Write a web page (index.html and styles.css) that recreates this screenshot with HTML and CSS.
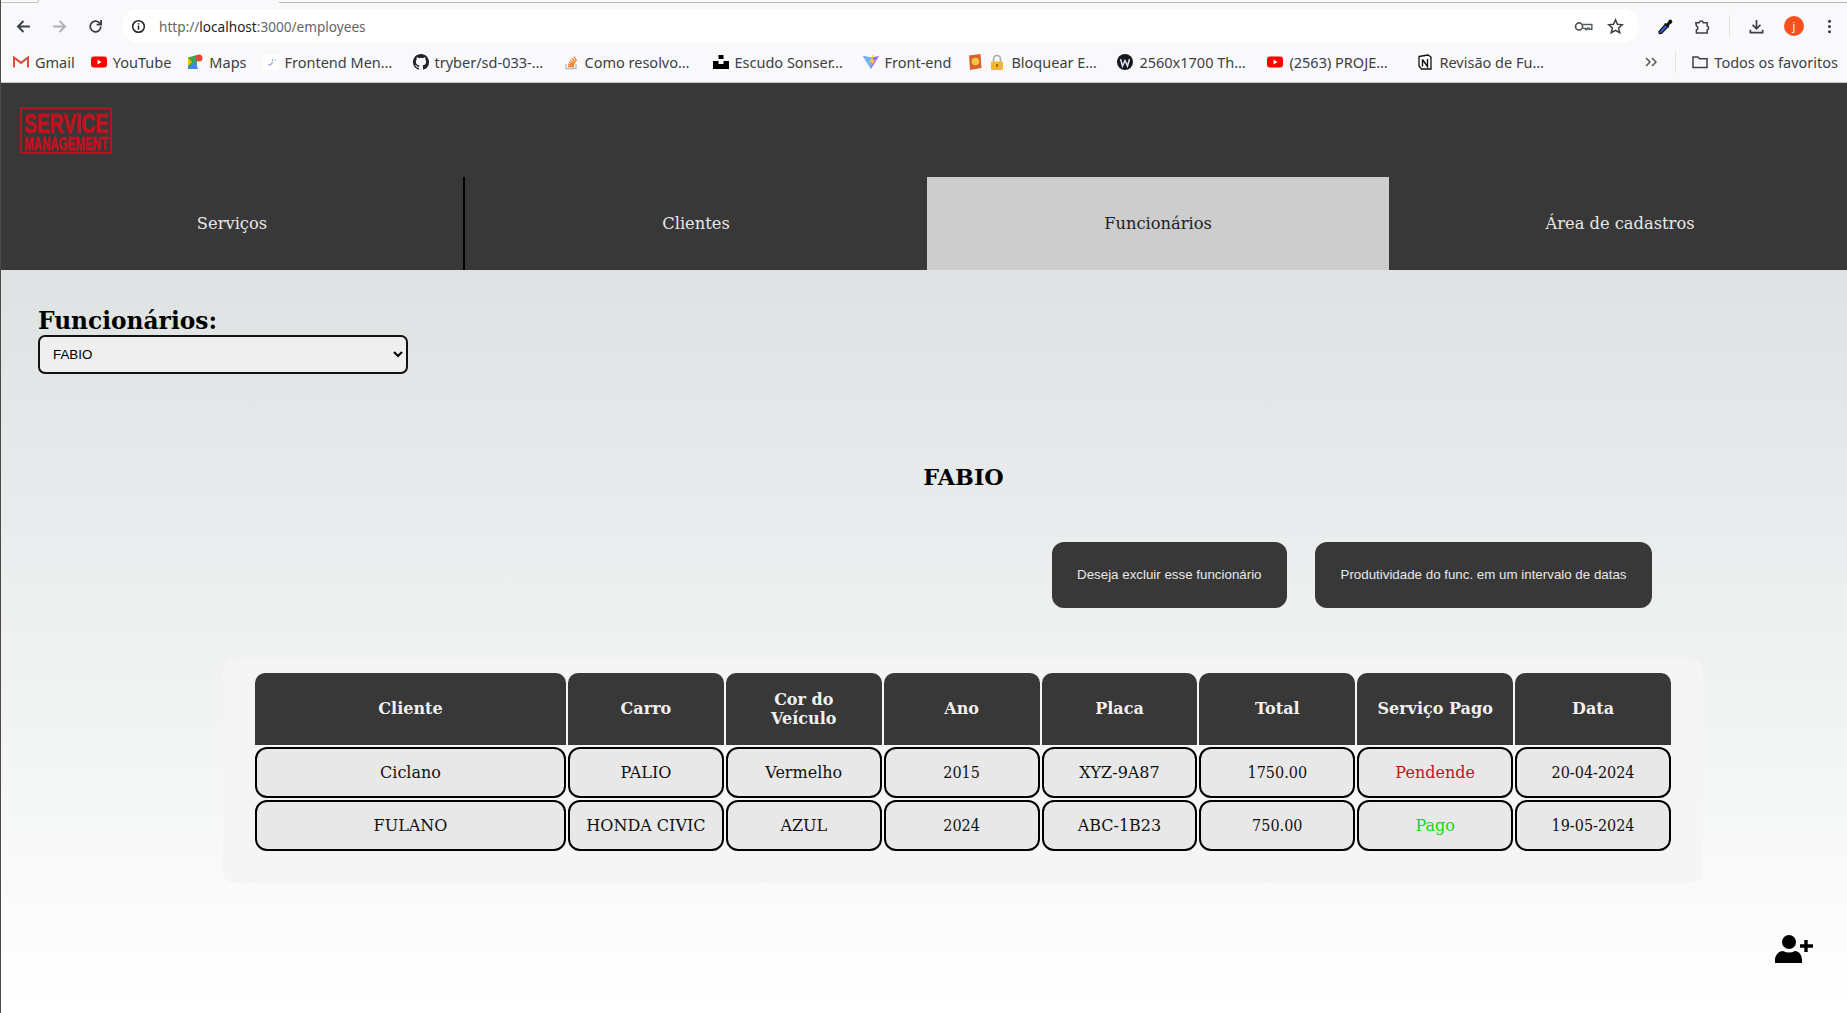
FILE: index.html
```html
<!doctype html>
<html lang="pt-BR">
  <head>
    <meta charset="utf-8" />
    <title>Service Management</title>
    <link rel="stylesheet" href="styles.css">
  </head>

  <body>
    <div class="browser">
      <div class="tabstrip">
        <span class="tab-left"></span>
        <span class="tab-right"></span>
      </div>
      <div class="toolbar">
        <svg class="tool" viewBox="0 0 16 16"><path d="M14 8H3M8 2.8 2.8 8 8 13.2" fill="none" stroke="#3c4043" stroke-width="1.8"/></svg>
        <svg class="tool tool-off" viewBox="0 0 16 16"><path d="M2 8h11M8 2.8 13.2 8 8 13.2" fill="none" stroke="#b0b2b5" stroke-width="1.8"/></svg>
        <svg class="tool" viewBox="0 0 16 16"><path d="M13 8a5 5 0 1 1-1.5-3.6L13 5.8M13.3 1.8v4.4H9" fill="none" stroke="#3c4043" stroke-width="1.7"/></svg>
        <div class="omnibox">
          <svg class="info" viewBox="0 0 16 16"><circle cx="8" cy="8" r="6.2" fill="none" stroke="#1f1f1f" stroke-width="1.6"/><path d="M8 7v4.4M8 4.4v1.5" stroke="#1f1f1f" stroke-width="1.6"/></svg>
          <span class="url">http://<b>localhost</b>:3000/employees</span>
          <svg class="omni-key" viewBox="0 0 20 14"><circle cx="5.200" cy="7" r="3.800" fill="none" stroke="#55585c" stroke-width="1.900"/><path d="M9 4.800h10v5.200h-2.800V8.800h-2v1.400h-2V9H9" fill="none" stroke="#55585c" stroke-width="1.500"/></svg>
          <svg class="omni-star" viewBox="0 0 18 18"><path d="m9 2 2.1 4.7 5.1.5-3.9 3.4 1.2 5L9 13l-4.5 2.6 1.2-5-3.9-3.4 5.1-.5z" fill="none" stroke="#3c4043" stroke-width="1.6"/></svg>
        </div>
        <div class="toolbar-end">
          <svg class="tool" viewBox="0 0 18 18"><path d="M2.500 16.500 2 14.500 9 6.500l2.800 2.600-7 7.200z" fill="#2f5fd0" stroke="#111" stroke-width="1.300"/><path d="m8.500 5.500 2 .2 2.200-3.200a2 2 0 0 1 3 2.700l-3 2.400.2 2-1.200.8-4-4z" fill="#111"/></svg>
          <svg class="tool" viewBox="0 0 18 18"><path d="M3 5h3.500a2.200 2.200 0 0 1 4.300 0H15v3.400a2.200 2.200 0 0 1 0 4.200V16H3.600v-3.400a2.200 2.200 0 0 0 0-4.200z" fill="none" stroke="#3c4043" stroke-width="1.600"/></svg>
          <span class="tool-sep"></span>
          <svg class="tool" viewBox="0 0 18 18"><path d="M9 2v9M4.800 7.200 9 11.400l4.200-4.200M2.500 12.500V15.500h13v-3" fill="none" stroke="#3c4043" stroke-width="1.800"/></svg>
          <span class="avatar">j</span>
          <svg class="tool" viewBox="0 0 18 18"><circle cx="9" cy="3.500" r="1.600" fill="#3c4043"/><circle cx="9" cy="9" r="1.600" fill="#3c4043"/><circle cx="9" cy="14.500" r="1.600" fill="#3c4043"/></svg>
        </div>
      </div>
      <div class="bookmarks">
        <a class="mark">
          <svg viewBox="0 0 16 16"><path d="M1 13.500V3.500l7 5.400 7-5.400v10" fill="none" stroke="#dd4b3e" stroke-width="2"/></svg>Gmail
        </a>
        <a class="mark">
          <svg viewBox="0 0 16 16"><rect y="2.500" width="16" height="11" rx="3" fill="#f00"/><path d="m6.500 5.500 4 2.500-4 2.500z" fill="#fff"/></svg>YouTube
        </a>
        <a class="mark">
          <svg viewBox="0 0 16 16"><path d="M1 3.500 10 1v14l-9 0z" fill="#34a853"/><path d="M1 15 8 7l3 8z" fill="#4285f4"/><path d="M1 3.500 5 8 1 12z" fill="#fbbc04"/><circle cx="12" cy="4" r="3.500" fill="#ea4335"/></svg>Maps
        </a>
        <a class="mark mark-long">
          <svg viewBox="0 0 16 16"><rect width="16" height="16" fill="#fff"/><path d="M5 11c2 0 4-1 4.500-3M9.500 5v2M12 6h1" fill="none" stroke="#8fa3cf" stroke-width="1.200"/></svg>Frontend Men…
        </a>
        <a class="mark mark-long">
          <svg viewBox="0 0 16 16"><path fill="#1f2328" d="M8 0C3.580 0 0 3.580 0 8c0 3.540 2.290 6.530 5.470 7.590.4.070.55-.17.55-.38 0-.19-.01-.82-.01-1.490-2.010.37-2.530-.49-2.690-.94-.09-.23-.48-.94-.82-1.130-.28-.15-.68-.52-.01-.53.63-.01 1.080.58 1.230.82.720 1.210 1.870.87 2.330.66.070-.52.280-.87.510-1.070-1.780-.2-3.640-.89-3.640-3.950 0-.87.310-1.590.820-2.150-.080-.2-.360-1.020.080-2.120 0 0 .670-.210 2.200.820a7.500 7.500 0 0 1 4 0c1.530-1.040 2.200-.82 2.200-.82.440 1.100.160 1.920.080 2.120.510.560.820 1.270.820 2.150 0 3.070-1.870 3.750-3.650 3.950.290.250.540.730.540 1.480 0 1.070-.010 1.930-.010 2.200 0 .210.150.460.550.380A8.010 8.010 0 0 0 16 8c0-4.420-3.580-8-8-8z"/></svg>tryber/sd-033-…
        </a>
        <a class="mark mark-long">
          <svg viewBox="0 0 16 16"><path d="M3 10v4.500h10V10" fill="none" stroke="#bcbbbb" stroke-width="1.300"/><path d="M5 12.500h6M5.200 10.500l5.800.6M5.800 8.500l5.500 1.500M7 6.300l5 2.700M8.800 4.300l4 3.800M11 2.500l2.600 4.500" stroke="#f48024" stroke-width="1.300"/></svg>Como resolvo…
        </a>
        <a class="mark mark-long">
          <svg viewBox="0 0 16 16"><path d="M5.500 1h5v4h-5zM0 7h5.500v3h5V7H16v8H0z" fill="#000"/></svg>Escudo Sonser…
        </a>
        <a class="mark">
          <svg viewBox="0 0 16 16"><path d="M0 2 8 15 16 2 8 3.500z" fill="#9f6cff"/><path d="M0 2 8 3.500V15z" fill="#6bb6ff"/><path d="M9.500 1 6.500 8.500H9L8 12l4-6H9.500l1-5z" fill="#ffd028"/></svg>Front-end
        </a>
        <a class="mark mark-long">
          <svg viewBox="0 0 16 16"><path d="M2 1.500 13.500 0l1 14L3 16z" fill="#d9622b"/><circle cx="8.500" cy="7.500" r="3.800" fill="#f6c544"/></svg>
          <svg viewBox="0 0 16 16"><path d="M4.500 8V5a3.500 3.500 0 0 1 7 0v3" fill="none" stroke="#a8a8a8" stroke-width="1.600"/><rect x="2" y="7.500" width="12" height="8.500" rx="1" fill="#f2b632"/><path d="M8 10v3" stroke="#7a5a10" stroke-width="1.500"/></svg>Bloquear E…
        </a>
        <a class="mark mark-long">
          <svg viewBox="0 0 16 16"><circle cx="8" cy="8" r="8" fill="#16181c"/><path d="m3.500 5 2 7 2.500-5.500 2.500 5.500 2-7" fill="none" stroke="#dfe3f5" stroke-width="1.500"/></svg>2560x1700 Th…
        </a>
        <a class="mark mark-long">
          <svg viewBox="0 0 16 16"><rect y="2.500" width="16" height="11" rx="3" fill="#f00"/><path d="m6.500 5.500 4 2.500-4 2.500z" fill="#fff"/></svg>(2563) PROJE…
        </a>
        <a class="mark mark-long">
          <svg viewBox="0 0 16 16"><path d="M2 2.500 11 1l3 2v12H4.500L2 12z" fill="#fff" stroke="#111" stroke-width="1.300"/><path d="M5.500 5.500v7M5.500 5.500l5 7V5" fill="none" stroke="#111" stroke-width="1.400"/></svg>Revisão de Fu…
        </a>
        <div class="bookmarks-end">
          <svg class="chevrons" viewBox="0 0 12 10"><path d="m1 1 4 4-4 4M7 1l4 4-4 4" fill="none" stroke="#555" stroke-width="1.500"/></svg>
          <span class="tool-sep"></span>
          <a class="mark">
            <svg viewBox="0 0 16 16"><path d="M1 3h5l1.500 1.800H15V13.500H1z" fill="none" stroke="#3c4043" stroke-width="1.500"/></svg>Todos os favoritos
          </a>
        </div>
      </div>
    </div>

    <header class="app-header">
      <div class="logo-row">
        <svg class="logo" viewBox="0 0 93 47">
          <rect x="1" y="1" width="91" height="45" fill="none" stroke="#c4101f" stroke-width="1.800"/>
          <g transform="scale(1 1.750)">
            <text x="4" y="14.600" textLength="85" lengthAdjust="spacingAndGlyphs" class="logo-top">SERVICE</text>
            <text x="4" y="24.600" textLength="85" lengthAdjust="spacingAndGlyphs" class="logo-bottom">MANAGEMENT</text>
          </g>
        </svg>
      </div>
      <nav class="nav">
        <a class="nav-item nav-first">Serviços</a>
        <a class="nav-item">Clientes</a>
        <a class="nav-item nav-active">Funcionários</a>
        <a class="nav-item">Área de cadastros</a>
      </nav>
    </header>

    <main class="content">
      <label class="picker-label" for="employee">Funcionários:</label>
      <select class="picker" id="employee">
        <option>FABIO</option>
      </select>

      <h2 class="employee-name">FABIO</h2>

      <div class="actions">
        <button class="action">Deseja excluir esse funcionário</button>
        <button class="action">Produtividade do func. em um intervalo de datas</button>
      </div>

      <section class="panel">
        <table class="services">
          <thead>
            <tr>
              <th class="col-client">Cliente</th>
              <th>Carro</th>
              <th>Cor do<br>Veículo</th>
              <th>Ano</th>
              <th>Placa</th>
              <th>Total</th>
              <th>Serviço Pago</th>
              <th>Data</th>
            </tr>
          </thead>
          <tbody>
            <tr>
              <td>Ciclano</td>
              <td>PALIO</td>
              <td>Vermelho</td>
              <td class="num">2015</td>
              <td>XYZ-9A87</td>
              <td class="num">1750.00</td>
              <td class="pending">Pendende</td>
              <td class="num">20-04-2024</td>
            </tr>
            <tr>
              <td>FULANO</td>
              <td>HONDA CIVIC</td>
              <td>AZUL</td>
              <td class="num">2024</td>
              <td>ABC-1B23</td>
              <td class="num">750.00</td>
              <td class="paid">Pago</td>
              <td class="num">19-05-2024</td>
            </tr>
          </tbody>
        </table>
      </section>

      <svg class="add-user" viewBox="0 0 38 28">
        <circle cx="14" cy="7" r="7"/>
        <path d="M0 28v-3c0-5 4-9 8-9 2 1 4 1.500 6 1.500s4-.5 6-1.500c4 0 7 4 7 9v3z"/>
        <path d="M31 5v12M25 11h13" stroke="#000" stroke-width="3.400" fill="none"/>
      </svg>
    </main>
  </body>
</html>
```

FILE: styles.css
```css
* {
  box-sizing: border-box;
}
body {
  margin: 0;
  height: 1013px;
  overflow: hidden;
  display: flex;
  flex-direction: column;
  border-left: 1px solid #4a4a4a;
  font-family: "DejaVu Serif", serif;
}

/* browser chrome */
.browser {
  height: 83px;
  background: #f9f9fb;
  border-bottom: 1px solid #c8c8c8;
  font-family: "Noto Sans", sans-serif;
  color: #3c4043;
}
.tabstrip {
  height: 3px;
  display: flex;
  justify-content: space-between;
}
.tab-left {
  width: 38px;
  border-bottom: 1px solid #c4c4c4;
  border-right: 1px solid #c4c4c4;
  border-bottom-right-radius: 3px;
}
.tab-right {
  width: 1568px;
  border-bottom: 1px solid #bbb;
}
.toolbar {
  height: 43px;
  display: flex;
  align-items: center;
  padding: 6px 9px 3px 14px;
}
.tool {
  width: 17px;
  height: 17px;
  margin-right: 19px;
  flex: none;
}
.omnibox {
  flex: 1;
  height: 34px;
  margin-left: -1px;
  background: #fff;
  border-radius: 17px;
  display: flex;
  align-items: center;
  padding: 0 15px 0 9px;
}
.info {
  width: 15px;
  height: 15px;
  margin-right: 13px;
}
.url {
  flex: 1;
  font-size: 13.600px;
  color: #666;
}
.url b {
  font-weight: 400;
  color: #1f1f1f;
}
.omni-key {
  width: 19px;
  height: 13px;
  margin-right: 14px;
}
.omni-star {
  width: 17px;
  height: 17px;
}
.toolbar-end {
  display: flex;
  align-items: center;
  margin-left: 18px;
}
.toolbar-end .tool:last-child {
  margin-right: 0;
}
.tool-sep {
  width: 1px;
  height: 22px;
  background: #e2e2e2;
  margin-right: 18px;
}
.avatar {
  width: 20px;
  height: 20px;
  margin-right: 17px;
  border-radius: 50%;
  background: #f4511e;
  color: #fff;
  font-size: 11px;
  line-height: 20px;
  text-align: center;
}
.bookmarks {
  height: 36px;
  display: flex;
  align-items: center;
  gap: 16px;
  padding: 0 9px 5px 12px;
  font-size: 14.500px;
  white-space: nowrap;
}
.mark {
  display: flex;
  align-items: center;
  gap: 6px;
}
.mark-long {
  width: 134px;
}
.mark svg {
  width: 16px;
  height: 16px;
  flex: none;
}
.bookmarks-end {
  margin-left: auto;
  display: flex;
  align-items: center;
}
.chevrons {
  width: 12px;
  height: 10px;
  margin-right: 18px;
}
.bookmarks-end .tool-sep {
  margin-right: 16px;
}

/* app header */
.app-header {
  background: #383838;
}
.logo-row {
  height: 94px;
  padding: 24px 0 0 19px;
}
.logo {
  display: block;
  width: 92px;
  height: 47px;
}
.logo-top,
.logo-bottom {
  font-family: "Liberation Sans", sans-serif;
  font-weight: 700;
  fill: #c4101f;
  stroke: #c4101f;
  stroke-width: 0.400px;
}
.logo-top {
  font-size: 16px;
}
.logo-bottom {
  font-size: 11px;
}
.nav {
  height: 93px;
  display: grid;
  grid-template-columns: 464px repeat(3, 462px);
}
.nav-item {
  display: flex;
  align-items: center;
  justify-content: center;
  font-size: 16.300px;
  color: #e8e8e8;
}
.nav-first {
  border-right: 2px solid #000;
}
.nav-active {
  background: #cdcdcd;
  color: #222;
}

/* content */
.content {
  flex: 1;
  position: relative;
  padding: 36px 0 0 37px;
  background: linear-gradient(#dee2e3, #fff);
}
.picker-label {
  display: block;
  font-size: 23.300px;
  font-weight: 700;
  line-height: 29px;
  color: #000;
}
.picker {
  display: block;
  width: 370px;
  height: 39px;
  padding: 0 9px;
  border: 2.500px solid #111;
  border-radius: 7px;
  background: #efefef;
  font-family: "Liberation Sans", sans-serif;
  font-size: 13.333px;
  color: #000;
}
.employee-name {
  margin: 88px 0 0 -37px;
  padding-left: 79px;
  text-align: center;
  font-size: 22.300px;
  line-height: 30px;
  color: #000;
}
.actions {
  display: flex;
  justify-content: flex-end;
  gap: 28px;
  margin-top: 50px;
  padding-right: 195px;
}
.action {
  height: 66px;
  padding: 0 25.500px 2px;
  border: 0;
  border-radius: 12px;
  background: #383838;
  color: #e8e8e8;
  font-family: "Liberation Sans", sans-serif;
  font-size: 13.333px;
}
.panel {
  width: 1480px;
  height: 224px;
  margin: 51px 0 0 185px;
  padding: 12px 0 0 30px;
  border-radius: 12px;
  background: #f5f5f5;
}
.services {
  width: 1420px;
  table-layout: fixed;
  border-collapse: separate;
  border-spacing: 2px;
  font-size: 16px;
}
.col-client {
  width: 311px;
}
.services th {
  height: 72px;
  padding: 0 16px 1px;
  border-radius: 10px 10px 0 0;
  background: #383838;
  color: #f0f0f0;
  line-height: 19px;
}
.services td {
  height: 51px;
  padding: 0;
  text-align: center;
  border: 2.500px solid #000;
  border-radius: 12px;
  background: #e8e8e8;
  color: #111;
}
.services .num {
  font-family: "DejaVu Serif Condensed", "DejaVu Serif", serif;
  font-stretch: condensed;
}
.services .pending {
  color: #c4101f;
}
.services .paid {
  color: #0bdc12;
}
.add-user {
  position: absolute;
  left: 1774px;
  top: 665px;
  width: 38px;
  height: 28px;
}
```
